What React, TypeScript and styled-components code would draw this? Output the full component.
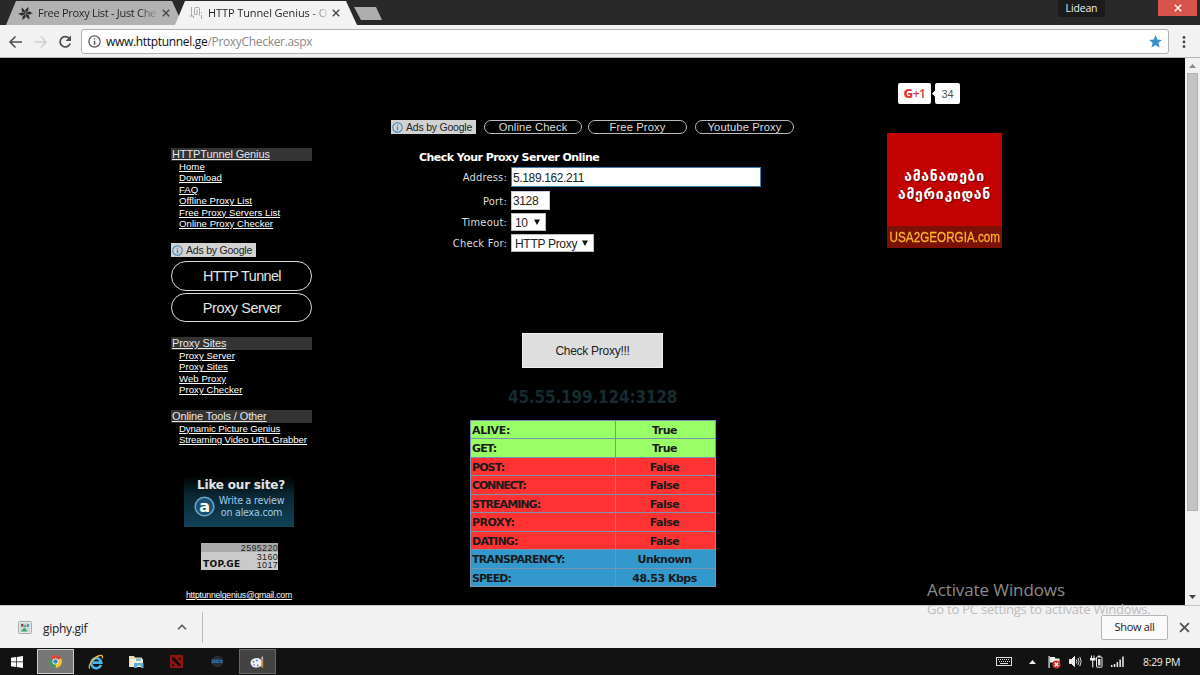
import * as React from 'react';
import styled, { createGlobalStyle } from 'styled-components';

const sans = `'Liberation Sans', Arial, sans-serif`;
const segoe = `'Open Sans', 'Noto Sans', sans-serif`;
const verdana = `'DejaVu Sans', Verdana, sans-serif`;
const tahoma = `'DejaVu Sans Condensed', 'DejaVu Sans', sans-serif`;

const GlobalStyle = createGlobalStyle`
  * {
    box-sizing: border-box;
  }
  body {
    margin: 0;
    background: #000;
    overflow: hidden;
  }
  svg {
    display: block;
    flex: none;
  }
`;

const Screen = styled.div`
  position: relative;
  display: flex;
  flex-direction: column;
  width: 1200px;
  height: 675px;
  overflow: hidden;
  white-space: nowrap;
  font-family: ${sans};
`;

/* ---------- browser chrome ---------- */

const TabStrip = styled.div`
  display: flex;
  height: 25px;
  padding-left: 6px;
  background: #292929;
`;

const Tab = styled.div<{ $active?: boolean }>`
  display: flex;
  align-items: center;
  width: ${({ $active }) => ($active ? 182 : 177)}px;
  height: 24px;
  margin-top: 1px;
  margin-left: ${({ $active }) => ($active ? -8 : 0)}px;
  padding: 0 ${({ $active }) => ($active ? 17 : 13)}px 0 ${({ $active }) => ($active ? 14 : 12)}px;
  background: ${({ $active }) => ($active ? '#f3f3f3' : '#b2b2b2')};
  clip-path: polygon(10px 0, calc(100% - 11px) 0, 100% 100%, 0 100%);
  color: #222;
`;

const TabTitle = styled.div<{ $spacing: string; $fade: string }>`
  flex: 1;
  margin-left: 5px;
  margin-right: 4px;
  font: 11px/22px ${segoe};
  letter-spacing: ${({ $spacing }) => $spacing};
  background: linear-gradient(90deg, #222 84%, ${({ $fade }) => $fade} 102%);
  background-clip: text;
  color: transparent;
`;

const NewTab = styled.div`
  width: 29px;
  height: 13px;
  margin: 7px 0 0 -3px;
  background: #aeaeae;
  clip-path: polygon(0 0, 22px 0, 28px 100%, 7px 100%);
`;

const ProfileName = styled.div`
  width: 47px;
  height: 17px;
  margin-left: auto;
  background: #1b1b1b;
  color: #eee;
  font: 10.5px/16px ${segoe};
  letter-spacing: -0.15px;
  text-align: center;
`;

const CloseWindow = styled.div`
  display: flex;
  align-items: center;
  justify-content: center;
  width: 39px;
  height: 16px;
  margin: 0 3px 0 53px;
  background: #d6544b;
`;

const Toolbar = styled.div`
  display: flex;
  align-items: center;
  height: 33px;
  padding: 1px 14px 0 8px;
  background: #f2f2f2;
  border-bottom: 1px solid #b4b4b4;
`;

const AddressBar = styled.div`
  display: flex;
  align-items: center;
  width: 1088px;
  height: 25px;
  margin-left: 8px;
  margin-right: 13px;
  padding: 0 6px;
  background: #fff;
  border: 1px solid #b0b0b0;
  border-radius: 3px;
`;

const Url = styled.div`
  flex: 1;
  margin-left: 5px;
  font: 12px/22px ${segoe};
  letter-spacing: -0.32px;
  color: #8a8a8a;

  b {
    font-weight: 400;
    color: #111;
  }
`;

/* ---------- web page ---------- */

const Viewport = styled.div`
  display: flex;
  height: 547px;
  background: #000;
`;

const Page = styled.div`
  display: flex;
  align-items: flex-start;
  width: 1185px;
  padding-left: 171px;
  color: #fff;
`;

const Scrollbar = styled.div`
  display: flex;
  flex-direction: column;
  align-items: center;
  width: 15px;
  padding: 5px 0 5px;
  background: #f1f1f1;
`;

const Thumb = styled.div`
  width: 11px;
  height: 438px;
  margin-top: 5px;
  margin-bottom: auto;
  background: #c4c4c6;
  border: 1px solid #b2b2b2;
`;

const Sidebar = styled.div`
  display: flex;
  flex-direction: column;
  width: 141px;
  padding-top: 90px;
`;

const Menu = styled.div<{ $gap: number }>`
  margin-bottom: ${({ $gap }) => $gap}px;
`;

const MenuHeading = styled.div`
  height: 13px;
  padding-left: 1px;
  background: #333;
  color: #e8e8e8;
  font: 11px/13px ${sans};
  letter-spacing: -0.12px;

  span {
    text-decoration: underline;
  }
`;

const MenuLink = styled.a<{ $spacing?: string }>`
  display: block;
  height: 11.4px;
  padding-left: 8px;
  font: 9.6px/11.4px ${sans};
  letter-spacing: ${({ $spacing }) => $spacing || '0.04px'};
  text-decoration: underline;
`;

const AdsLabel = styled.div`
  display: flex;
  align-items: center;
  width: 85px;
  height: 14px;
  padding-left: 1px;
  background: #d2d2d2;
  color: #222;
  font: 10.5px/14px ${sans};
  letter-spacing: -0.22px;

  svg {
    margin-right: 3px;
  }
`;

const PillList = styled.div`
  display: flex;
  flex-direction: column;
  gap: 2px;
  margin: 4px 0 14.6px;
`;

const SidePill = styled.div<{ $spacing: string }>`
  height: 29.5px;
  padding-left: 1px;
  border: 1.3px solid #ddd;
  border-radius: 15px;
  color: #e4e4e4;
  font: 14.4px/28px ${sans};
  letter-spacing: ${({ $spacing }) => $spacing};
  text-align: center;
`;

const AlexaBadge = styled.div`
  display: flex;
  flex-direction: column;
  align-items: center;
  width: 110px;
  height: 54px;
  margin: 27px 0 0 13px;
  padding-top: 5px;
  background: linear-gradient(#000 5%, #0a2632 40%, #124359 100%);
`;

const AlexaTitle = styled.div`
  margin-left: 4px;
  color: #e4e4e4;
  font: bold 12px/15px ${verdana};
  letter-spacing: -0.2px;
`;

const AlexaBody = styled.div`
  display: flex;
  align-items: center;
  gap: 4px;
  margin-top: 2px;
  color: #9fcbe6;
  font: 9.6px/11.5px ${verdana};
  letter-spacing: -0.25px;
  text-align: center;
`;

const Counter = styled.div`
  display: grid;
  grid-template-columns: 37px 40px;
  width: 77px;
  height: 27px;
  margin: 16px 0 0 30px;
  background: linear-gradient(#aaa 0 9px, #cacaca 9px);
  color: #222;
`;

const CounterBrand = styled.div`
  align-self: end;
  padding-left: 2px;
  color: #111;
  font: bold 9px/12px ${verdana};
  letter-spacing: 0.3px;
`;

const CounterNumbers = styled.div`
  padding-top: 1px;
  font: 9px/9px ${sans};
  letter-spacing: 0.3px;
  text-align: right;

  div {
    height: 8.6px;
  }
`;

const Email = styled.a`
  margin: 20px 0 0 15px;
  font: 8.7px/11px ${sans};
  letter-spacing: -0.24px;
  text-decoration: underline;
`;

const Main = styled.div`
  display: flex;
  flex-direction: column;
  width: 404px;
  margin-left: 79px;
  padding-top: 62px;
`;

const AdRow = styled.div`
  display: flex;
  align-items: center;
  height: 14px;
`;

const AdPill = styled.div<{ $left: number; $width: number }>`
  width: ${({ $width }) => $width}px;
  height: 13.5px;
  margin-left: ${({ $left }) => $left}px;
  border: 1.2px solid #bbb;
  border-radius: 7px;
  color: #ddd;
  font: 11.2px/12px ${sans};
  letter-spacing: 0.13px;
  text-align: center;
`;

const Title = styled.div`
  margin: 16px 0 0 28px;
  font: bold 11px/15px ${verdana};
  letter-spacing: -0.54px;
`;

const Field = styled.div<{ $height: number; $gap: number }>`
  display: flex;
  align-items: center;
  height: ${({ $height }) => $height}px;
  margin-top: ${({ $gap }) => $gap}px;
`;

const FieldLabel = styled.div`
  width: 116px;
  margin-right: 4px;
  padding-top: 2px;
  color: #ddd;
  font: 11px/14px ${tahoma};
  letter-spacing: 0.2px;
  text-align: right;
`;

const Input = styled.div<{ $width: number; $focused?: boolean }>`
  width: ${({ $width }) => $width}px;
  height: 100%;
  padding-left: 1px;
  background: #fff;
  border: 1px solid ${({ $focused }) => ($focused ? '#3d7fae' : '#ccc')};
  color: #222;
  font: 12px/${({ $focused }) => ($focused ? 20 : 18)}px ${sans};
  letter-spacing: -0.37px;
`;

const Select = styled.div<{ $width: number }>`
  display: flex;
  align-items: center;
  justify-content: space-between;
  width: ${({ $width }) => $width}px;
  height: 100%;
  padding: 1px 5px 0 3px;
  background: #fff;
  border: 1px solid #bbb;
  color: #222;
  font: 12px/16px ${sans};
  letter-spacing: -0.3px;
`;

const SubmitButton = styled.div`
  width: 141px;
  height: 35px;
  margin: 81px 0 0 131px;
  background: #dedede;
  border: 1px solid #eee;
  color: #222;
  font: 12px/34px ${sans};
  letter-spacing: -0.28px;
  text-align: center;
`;

const ProxyAddress = styled.div`
  margin: 18px 0 0 117px;
  color: #172a30;
  font: bold 17px/22px ${tahoma};
  letter-spacing: -0.18px;
`;

const Results = styled.div`
  width: 246px;
  margin: 12px 0 0 79px;
  border-top: 1px solid #7b93ac;
  border-left: 1px solid #7b93ac;
`;

const ResultRow = styled.div<{ $color: string }>`
  display: grid;
  grid-template-columns: 145px 100px;
  height: 18.45px;
  background: ${({ $color }) => $color};
  color: #1a1a1a;
`;

const ResultCell = styled.div<{ $center?: boolean; $spacing?: number }>`
  height: 18.45px;
  padding-left: ${({ $center }) => ($center ? 0 : 1)}px;
  padding-right: ${({ $center }) => ($center ? 2 : 0)}px;
  border-right: 1px solid #7b93ac;
  border-bottom: 1px solid #7b93ac;
  font: bold 11px/19px ${verdana};
  letter-spacing: ${({ $spacing }) => $spacing ?? -0.5}px;
  text-align: ${({ $center }) => ($center ? 'center' : 'left')};
`;

const Aside = styled.div`
  width: 115px;
  margin-left: 92px;
  padding-top: 25px;
`;

const PlusOne = styled.div`
  display: flex;
  margin-left: 11px;
  height: 21px;
`;

const PlusButton = styled.div`
  width: 33px;
  background: #fff;
  border-radius: 2px;
  color: #d5423a;
  font: 600 12px/21px ${segoe};
  letter-spacing: -0.4px;
  text-align: center;

  b {
    font-size: 13px;
  }
`;

const PlusCount = styled.div`
  width: 25px;
  background: #fff;
  border-radius: 2px;
  color: #555;
  font: 11px/22px ${sans};
  text-align: center;
`;

const Banner = styled.div`
  width: 115px;
  height: 115px;
  margin-top: 29px;
  padding-top: 34px;
  background: #c30202;
`;

const BannerText = styled.div`
  height: 18px;
  color: #fff;
  font: bold 14px/18px 'DejaVu Sans', sans-serif;
  letter-spacing: 0.7px;
  text-align: center;
  text-shadow: 1px 1px 1px #600;
`;

const BannerLink = styled.div`
  display: flex;
  justify-content: center;
  height: 22px;
  margin-top: 23px;
  background: #7c1108;
  color: #f7b52c;
  font: 15px/21px ${sans};
  -webkit-text-stroke: 0.3px #f7b52c;

  span {
    transform: scaleX(0.78);
  }
`;

/* ---------- download shelf and taskbar ---------- */

const Shelf = styled.div`
  display: flex;
  align-items: center;
  height: 43px;
  padding: 0 10px 0 18px;
  background: #f2f2f2;
  border-top: 1px solid #c4c4c4;
`;

const FileName = styled.div`
  width: 134px;
  margin: 4px 0 0 11px;
  color: #222;
  font: 12px/18px ${segoe};
  letter-spacing: -0.3px;
`;

const Divider = styled.div`
  width: 1px;
  height: 31px;
  margin-left: 15px;
  background: #bdbdbd;
`;

const ShowAll = styled.div`
  width: 67px;
  height: 25px;
  margin: 0 11px 0 auto;
  background: #fafafa;
  border: 1px solid #b5b5b5;
  border-radius: 2px;
  color: #222;
  font: 11px/22px ${segoe};
  letter-spacing: -0.3px;
  text-align: center;
`;

const Taskbar = styled.div`
  display: flex;
  align-items: center;
  height: 27px;
  background: #121212;
`;

const TaskButton = styled.div<{
  $width: number;
  $after?: number;
  $state?: 'active' | 'open';
}>`
  display: flex;
  align-items: center;
  justify-content: center;
  width: ${({ $width }) => $width}px;
  height: 25px;
  margin-right: ${({ $after }) => $after || 0}px;
  background: ${({ $state }) =>
    $state === 'active' ? '#777' : $state === 'open' ? '#434343' : 'none'};
  border: ${({ $state }) =>
    $state === 'active'
      ? '1px solid #ccc'
      : $state === 'open'
      ? '1px solid #686868'
      : '0'};
`;

const Tray = styled.div`
  display: flex;
  align-items: center;
  gap: 8px;
  margin-left: auto;
  margin-right: 19px;
`;

const TrayArrow = styled.div`
  margin: 0 4px 0 9px;
`;

const Clock = styled.div`
  width: 38px;
  margin-left: 11px;
  color: #eee;
  font: 10.5px/24px ${segoe};
  letter-spacing: -0.3px;
`;

const Watermark = styled.div`
  position: absolute;
  left: 927px;
  top: 578px;
  color: #8b8b8b;
  font: 17px/24px ${segoe};
  letter-spacing: -0.1px;

  div {
    color: #bcbcbc;
    font-size: 13px;
    line-height: 15px;
    letter-spacing: -0.21px;
  }
`;

/* ---------- icons ---------- */

const Cross = ({ size, color }: { size: number; color: string }) => (
  <svg width={size} height={size} viewBox="0 0 10 10">
    <path d="M1 1L9 9M9 1L1 9" stroke={color} strokeWidth="1.7" />
  </svg>
);

const InfoIcon = ({ size, color }: { size: number; color: string }) => (
  <svg width={size} height={size} viewBox="0 0 12 12" fill="none" stroke={color}>
    <circle cx="6" cy="6" r="5.2" strokeWidth="1.1" />
    <path d="M6 5.2V9M6 2.9V4.2" strokeWidth="1.4" />
  </svg>
);

const PinwheelIcon = () => (
  <svg width="15" height="15" viewBox="-8 -8 16 16">
    {[20, 80, 140, 200, 260, 320].map(angle => (
      <path
        key={angle}
        d="M0 0L-1.6 -4L1 -7.8L1.6 -3.6Z"
        fill="#2b2b2b"
        transform={`rotate(${angle})`}
      />
    ))}
  </svg>
);

const TunnelIcon = () => (
  <svg width="14" height="14" viewBox="0 0 14 14" fill="none" stroke="#aaa">
    <path d="M2.5 1V10M0.5 10H4.5V12M5.5 6V2.5Q5.5 1.5 6.5 1.5H9.5Q10.5 1.5 10.5 2.5V9.5M8 3.5V8.5H5.5V6M12.5 6V7M12.5 9V13" />
  </svg>
);

const NavIcons = () => (
  <svg width="65" height="16" viewBox="0 0 65 16" fill="none" strokeWidth="1.6">
    <path d="M14 8H2M7.5 2.5L2 8L7.5 13.5" stroke="#505050" />
    <path d="M26.5 8H38M33 2.5L38 8L33 13.5" stroke="#cfcfcf" />
    <path d="M61.2 4.3A5.2 5.2 0 1 0 62.2 9.5" stroke="#505050" strokeWidth="1.8" />
    <path d="M63 1.5V7H57.5Z" fill="#505050" />
  </svg>
);

const StarIcon = () => (
  <svg width="13" height="13" viewBox="0 0 24 24" fill="#3593cc">
    <path d="M12 0L15.3 8.4L24 9L17.3 14.5L19.5 23.5L12 18.5L4.5 23.5L6.7 14.5L0 9L8.7 8.4Z" />
  </svg>
);

const DotsIcon = () => (
  <svg width="4" height="14" viewBox="0 0 4 14" fill="#444">
    <circle cx="2" cy="2.4" r="1.4" />
    <circle cx="2" cy="7" r="1.4" />
    <circle cx="2" cy="11.6" r="1.4" />
  </svg>
);

const Triangle = ({ up, color }: { up?: boolean; color: string }) => (
  <svg width="7" height="5" viewBox="0 0 7 5">
    <path d={up ? 'M0 5L3.5 1L7 5Z' : 'M0 0H7L3.5 4Z'} fill={color} />
  </svg>
);

const SelectArrow = () => (
  <svg width="6" height="7" viewBox="0 0 6 7">
    <path d="M0 0.5H6L3 6Z" fill="#111" />
  </svg>
);

const AlexaIcon = () => (
  <svg width="21" height="21" viewBox="0 0 21 21">
    <circle cx="10.5" cy="10.5" r="9.3" fill="#1c5173" stroke="#6ca6cc" strokeWidth="1.5" />
    <text x="10.5" y="15.8" fill="#fff" fontFamily="DejaVu Sans" fontWeight="bold" fontSize="16" textAnchor="middle">
      a
    </text>
  </svg>
);

const PictureIcon = () => (
  <svg width="14" height="13" viewBox="0 0 14 13">
    <rect x="0.5" y="0.5" width="13" height="12" rx="1" fill="#e8e8e8" stroke="#aaa" />
    <rect x="2" y="2" width="10" height="9" fill="#c3dade" />
    <path d="M3 10.5L6.5 6.5L9.5 10.5Z" fill="#4a9e56" />
    <rect x="3" y="3" width="2.5" height="2.5" fill="#b23a36" />
    <path d="M5.5 5.5L7.5 3.5L8.5 6Z" fill="#4a8a57" />
    <rect x="9" y="3" width="2" height="3" fill="#5f8dbe" />
  </svg>
);

const WindowsIcon = () => (
  <svg width="12" height="12" viewBox="0 0 12 12" fill="#fff">
    <path d="M0 1.8L5.2 1V5.6H0ZM5.9 0.9L12 0V5.6H5.9ZM0 6.3H5.2V11L0 10.2ZM5.9 6.3H12V12L5.9 11.1Z" />
  </svg>
);

const ChromeIcon = () => (
  <svg width="13" height="13" viewBox="0 0 14 14">
    <path d="M7 7L1 3.5A7 7 0 0 1 13 3.5Z" fill="#d94a3c" />
    <path d="M7 7L13 3.5A7 7 0 0 1 7 14Z" fill="#f4c430" />
    <path d="M7 7L7 14A7 7 0 0 1 1 3.5Z" fill="#3f9c57" />
    <circle cx="7" cy="7" r="3.3" fill="#fff" />
    <circle cx="7" cy="7" r="2.5" fill="#3d82c4" />
  </svg>
);

const ExplorerIcon = () => (
  <svg width="16" height="16" viewBox="0 0 16 16" fill="none">
    <path d="M13 11A5 5 0 1 1 13.3 8.6H5" stroke="#49b4ea" strokeWidth="2.6" />
    <path d="M2 14.5C-1 13 5 3 12 1.5C15 1 15 3 14 4.5" stroke="#e6b84a" strokeWidth="1.3" />
  </svg>
);

const FolderIcon = () => (
  <svg width="15" height="14" viewBox="0 0 15 14">
    <path d="M0 1H5L6 2.5H13V12H0Z" fill="#e5dcb4" />
    <path d="M1.5 4H14V12H1.5Z" fill="#f2efdc" />
    <path d="M5 13V8H14.5V13H12V10.5H8V13Z" fill="#5fa9d3" />
    <path d="M7 3.5H12V6H7Z" fill="#8eb8cc" />
  </svg>
);

const DotaIcon = () => (
  <svg width="13" height="13" viewBox="0 0 13 13">
    <rect width="13" height="13" fill="#8d1614" />
    <path d="M2 2L4.5 2.5L11 9.5L10.5 11.5L8.5 11L2 4.5ZM8.5 2.5L11 3L10.5 5.5L8.5 4ZM2.5 8.5L4.5 10L4 11.5L2 11Z" fill="#1d0908" />
  </svg>
);

const PoxIcon = () => (
  <svg width="13" height="13" viewBox="0 0 13 13">
    <circle cx="6.5" cy="6.5" r="5.8" fill="#292d33" />
    <path
      d="M1.2 8.5V5H3.5V7.2H1.5M5 5H7.2V7.5H5ZM8.7 4.8L11.5 7.8M11.5 4.8L8.7 7.8"
      fill="none"
      stroke="#2f74ae"
      strokeWidth="1.1"
    />
  </svg>
);

const PaintIcon = () => (
  <svg width="15" height="14" viewBox="0 0 15 14">
    <ellipse cx="6.5" cy="7.8" rx="6" ry="4.8" fill="#eef1f3" />
    <circle cx="3.6" cy="6.8" r="1" fill="#58a05f" />
    <circle cx="6.8" cy="5.4" r="1" fill="#5289c4" />
    <circle cx="4.2" cy="9.8" r="0.9" fill="#8c8cd0" />
    <circle cx="7.8" cy="10.4" r="0.9" fill="#777" />
    <path d="M11.2 5H13.2V12.5H11.2Z" fill="#dd8a3c" />
    <path d="M11 4.5L12.2 0.5L13.5 4.5Z" fill="#c9c9c9" />
  </svg>
);

const KeyboardIcon = () => (
  <svg width="16" height="9" viewBox="0 0 16 9" fill="none" stroke="#ddd">
    <rect x="0.5" y="0.5" width="15" height="8" />
    <path d="M2 2.5H14M3 4.5H14" strokeDasharray="1 1" />
    <path d="M4 6.5H12" />
  </svg>
);

const FlagIcon = () => (
  <svg width="13" height="14" viewBox="0 0 13 14">
    <path d="M0.5 1H1.7V13H0.5ZM2 2H7V3.5H11.5V8H6V7.5H2Z" fill="#eee" />
    <circle cx="8.5" cy="9.5" r="4" fill="#d0332c" />
    <path d="M6.8 7.8L10.2 11.2M10.2 7.8L6.8 11.2" stroke="#fff" strokeWidth="1.3" />
  </svg>
);

const SpeakerIcon = () => (
  <svg width="13" height="13" viewBox="0 0 13 13" fill="none" stroke="#eee">
    <path d="M0.5 4.5H2.5L5.5 1.5V11.5L2.5 8.5H0.5Z" fill="#eee" />
    <path d="M7.3 4.5Q8.5 6.5 7.3 8.5M9 3Q11 6.5 9 10M10.8 1.8Q13.5 6.5 10.8 11.2" strokeWidth="0.9" />
  </svg>
);

const BatteryIcon = () => (
  <svg width="13" height="13" viewBox="0 0 13 13">
    <path d="M1 0.5H2V3H3.5V0.5H4.5V3H5.5V5.5H3.3V12.5H2.2V5.5H0V3H1Z" fill="#eee" />
    <rect x="6.5" y="2" width="5.5" height="10.2" rx="0.5" fill="none" stroke="#eee" />
    <path d="M8 0.5H10.5V2H8ZM8 4H10.5V10.5H8Z" fill="#ddd" />
  </svg>
);

const SignalIcon = () => (
  <svg width="13" height="11" viewBox="0 0 13 11" fill="#eee">
    <path d="M0 9H1.5V11H0ZM2.8 8H4.3V11H2.8ZM5.6 6H7.1V11H5.6ZM8.4 3.5H9.9V11H8.4ZM11.2 0.5H12.7V11H11.2Z" />
  </svg>
);

/* ---------- data ---------- */

const GREEN = '#99ff66';
const RED = '#ff3333';
const BLUE = '#3399cc';

const results = [
  { label: 'ALIVE:', value: 'True', color: GREEN, spacing: -0.35 },
  { label: 'GET:', value: 'True', color: GREEN, spacing: -0.9 },
  { label: 'POST:', value: 'False', color: RED, spacing: -0.9 },
  { label: 'CONNECT:', value: 'False', color: RED, spacing: -1.15 },
  { label: 'STREAMING:', value: 'False', color: RED, spacing: -0.95 },
  { label: 'PROXY:', value: 'False', color: RED, spacing: -0.5 },
  { label: 'DATING:', value: 'False', color: RED, spacing: -0.75 },
  { label: 'TRANSPARENCY:', value: 'Unknown', color: BLUE, spacing: -0.7 },
  { label: 'SPEED:', value: '48.53 Kbps', color: BLUE, spacing: -0.95 },
];

const siteLinks = [
  'Home',
  'Download',
  'FAQ',
  'Offline Proxy List',
  'Free Proxy Servers List',
  'Online Proxy Checker',
];
const proxyLinks = ['Proxy Server', 'Proxy Sites', 'Web Proxy', 'Proxy Checker'];
const toolLinks = ['Dynamic Picture Genius', 'Streaming Video URL Grabber'];

type MenuBlockProps = {
  heading: string;
  links: string[];
  gap: number;
  spacing?: string;
};

const MenuBlock = ({ heading, links, gap, spacing }: MenuBlockProps) => (
  <Menu $gap={gap}>
    <MenuHeading>
      <span>{heading}</span>
    </MenuHeading>
    {links.map(link => (
      <MenuLink key={link} $spacing={spacing}>
        {link}
      </MenuLink>
    ))}
  </Menu>
);

const AdsByGoogle = () => (
  <AdsLabel>
    <InfoIcon size={11} color="#2f88bb" />
    Ads by Google
  </AdsLabel>
);

const App = (): React.ReactElement => (
  <Screen>
    <GlobalStyle />
    <TabStrip>
      <Tab>
        <PinwheelIcon />
        <TabTitle $spacing="-0.3px" $fade="#b2b2b2">
          Free Proxy List - Just Che
        </TabTitle>
        <Cross size={8} color="#444" />
      </Tab>
      <Tab $active>
        <TunnelIcon />
        <TabTitle $spacing="-0.1px" $fade="#f3f3f3">
          HTTP Tunnel Genius - O
        </TabTitle>
        <Cross size={8} color="#444" />
      </Tab>
      <NewTab />
      <ProfileName>Lidean</ProfileName>
      <CloseWindow>
        <Cross size={8} color="#fff" />
      </CloseWindow>
    </TabStrip>

    <Toolbar>
      <NavIcons />
      <AddressBar>
        <InfoIcon size={13} color="#555" />
        <Url>
          <b>www.httptunnel.ge</b>/ProxyChecker.aspx
        </Url>
        <StarIcon />
      </AddressBar>
      <DotsIcon />
    </Toolbar>

    <Viewport>
      <Page>
        <Sidebar>
          <MenuBlock heading="HTTPTunnel Genius" links={siteLinks} gap={14} />
          <AdsByGoogle />
          <PillList>
            <SidePill $spacing="-0.6px">HTTP Tunnel</SidePill>
            <SidePill $spacing="-0.4px">Proxy Server</SidePill>
          </PillList>
          <MenuBlock heading="Proxy Sites" links={proxyLinks} gap={14} />
          <MenuBlock heading="Online Tools / Other" links={toolLinks} gap={1} spacing="-0.08px" />
          <AlexaBadge>
            <AlexaTitle>Like our site?</AlexaTitle>
            <AlexaBody>
              <AlexaIcon />
              <div>
                Write a review
                <br />
                on alexa.com
              </div>
            </AlexaBody>
          </AlexaBadge>
          <Counter>
            <CounterBrand>TOP.GE</CounterBrand>
            <CounterNumbers>
              <div>2595220</div>
              <div>3160</div>
              <div>1017</div>
            </CounterNumbers>
          </Counter>
          <Email>httptunnelgenius@gmail.com</Email>
        </Sidebar>

        <Main>
          <AdRow>
            <AdsByGoogle />
            <AdPill $left={8} $width={98}>
              Online Check
            </AdPill>
            <AdPill $left={6} $width={99}>
              Free Proxy
            </AdPill>
            <AdPill $left={8} $width={99}>
              Youtube Proxy
            </AdPill>
          </AdRow>
          <Title>Check Your Proxy Server Online</Title>
          <Field $height={20} $gap={2}>
            <FieldLabel>Address:</FieldLabel>
            <Input $width={250} $focused>
              5.189.162.211
            </Input>
          </Field>
          <Field $height={19} $gap={4}>
            <FieldLabel>Port:</FieldLabel>
            <Input $width={39}>3128</Input>
          </Field>
          <Field $height={18} $gap={3}>
            <FieldLabel>Timeout:</FieldLabel>
            <Select $width={35}>
              10
              <SelectArrow />
            </Select>
          </Field>
          <Field $height={18} $gap={3}>
            <FieldLabel>Check For:</FieldLabel>
            <Select $width={83}>
              HTTP Proxy
              <SelectArrow />
            </Select>
          </Field>
          <SubmitButton>Check Proxy!!!</SubmitButton>
          <ProxyAddress>45.55.199.124:3128</ProxyAddress>
          <Results>
            {results.map(({ label, value, color, spacing }) => (
              <ResultRow key={label} $color={color}>
                <ResultCell $spacing={spacing}>{label}</ResultCell>
                <ResultCell $center>{value}</ResultCell>
              </ResultRow>
            ))}
          </Results>
        </Main>

        <Aside>
          <PlusOne>
            <PlusButton>
              <b>G</b>+1
            </PlusButton>
            <svg width="4" height="21" viewBox="0 0 4 21">
              <path d="M4 7.5L1 10.5L4 13.5Z" fill="#fff" />
            </svg>
            <PlusCount>34</PlusCount>
          </PlusOne>
          <Banner>
            <BannerText>ამანათები</BannerText>
            <BannerText>ამერიკიდან</BannerText>
            <BannerLink>
              <span>USA2GEORGIA.com</span>
            </BannerLink>
          </Banner>
        </Aside>
      </Page>
      <Scrollbar>
        <Triangle up color="#8a8a8a" />
        <Thumb />
        <Triangle color="#444" />
      </Scrollbar>
    </Viewport>

    <Shelf>
      <PictureIcon />
      <FileName>giphy.gif</FileName>
      <svg width="10" height="6" viewBox="0 0 10 6">
        <path d="M1 5.3L5 1.2L9 5.3" fill="none" stroke="#555" strokeWidth="1.5" />
      </svg>
      <Divider />
      <ShowAll>Show all</ShowAll>
      <Cross size={11} color="#555" />
    </Shelf>

    <Taskbar>
      <TaskButton $width={34} $after={3}>
        <WindowsIcon />
      </TaskButton>
      <TaskButton $width={37} $state="active">
        <ChromeIcon />
      </TaskButton>
      <TaskButton $width={44}>
        <ExplorerIcon />
      </TaskButton>
      <TaskButton $width={36}>
        <FolderIcon />
      </TaskButton>
      <TaskButton $width={45}>
        <DotaIcon />
      </TaskButton>
      <TaskButton $width={36} $after={4}>
        <PoxIcon />
      </TaskButton>
      <TaskButton $width={37} $state="open">
        <PaintIcon />
      </TaskButton>
      <Tray>
        <KeyboardIcon />
        <TrayArrow>
          <Triangle up color="#eee" />
        </TrayArrow>
        <FlagIcon />
        <SpeakerIcon />
        <BatteryIcon />
        <SignalIcon />
        <Clock>8:29 PM</Clock>
      </Tray>
    </Taskbar>

    <Watermark>
      Activate Windows
      <div>Go to PC settings to activate Windows.</div>
    </Watermark>
  </Screen>
);

export default App;
